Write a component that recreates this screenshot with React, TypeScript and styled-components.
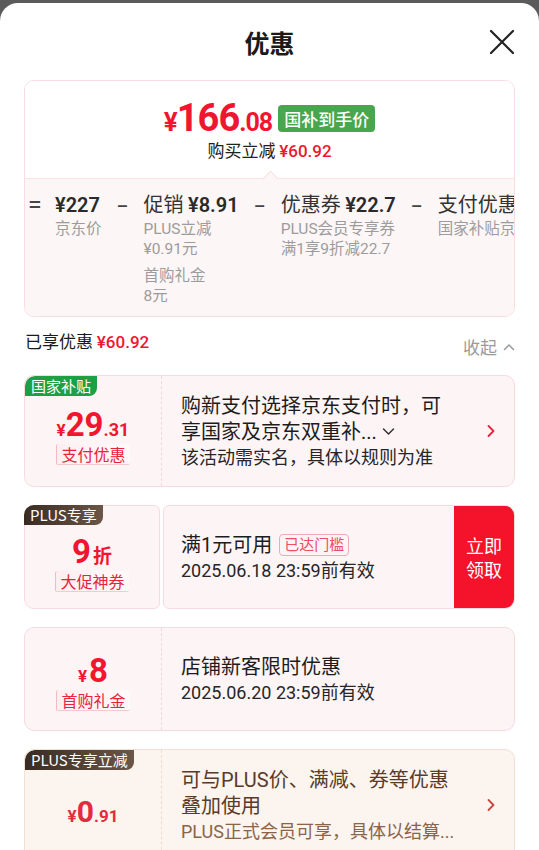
import React from "react";
import styled, { createGlobalStyle, css } from "styled-components";

const RED = "#f0162f";
const CJK = `"Noto Sans CJK SC", "Noto Sans", sans-serif`;
const NUM = `Roboto, "Noto Sans CJK SC", sans-serif`;

const GlobalStyle = createGlobalStyle`
  body {
    margin: 0;
    background: #5b5b5b;
    font-family: ${CJK};
    color: #1f1f1f;
  }
  #root {
    padding-top: 3px;
  }
`;

const Sheet = styled.div`
  height: 847px;
  background: #fff;
  border-radius: 18px 18px 0 0;
  overflow: hidden;
`;

const Header = styled.header`
  display: grid;
  grid-template-columns: 1fr auto 1fr;
  align-items: center;
  height: 77px;
  padding: 0 24px;
`;

const Title = styled.h1`
  grid-column: 2;
  margin: 0;
  font-size: 25px;
  font-weight: 700;
  color: #1a1a1a;
`;

const CloseButton = styled.button`
  justify-self: end;
  display: flex;
  padding: 0;
  border: none;
  background: none;
`;

// ---- price summary box
const PriceBox = styled.section`
  margin: 0 24px;
  border: 1px solid #fadce2;
  border-radius: 10px;
  overflow: hidden;
`;

const PriceTop = styled.div`
  display: flex;
  flex-direction: column;
  align-items: center;
  padding: 17px 0 15px;
  background: #fff;
  border-bottom: 1px solid #fbe4e8;
`;

const FinalRow = styled.div`
  display: flex;
  align-items: center;
  gap: 6px;
  height: 40px;
`;

const FinalPrice = styled.span`
  font-family: ${NUM};
  font-weight: 700;
  color: ${RED};
  letter-spacing: -1px;
`;

const Part = styled.span<{ $size: number }>`
  font-size: ${(p) => p.$size}px;
`;

const GreenBadge = styled.span`
  height: 27px;
  padding: 0 6px;
  border-radius: 4px;
  background: #48a64e;
  color: #fff;
  font-size: 17px;
  font-weight: 500;
  line-height: 27px;
`;

const SavedLine = styled.div`
  font-size: 17px;
  line-height: 24px;
  color: #222;
`;

const RedNum = styled.span<{ $size?: number }>`
  font-family: ${NUM};
  font-weight: 500;
  color: ${RED};
  font-size: ${(p) => p.$size ?? 17}px;
`;

const Breakdown = styled.div`
  position: relative;
  display: flex;
  align-items: flex-start;
  height: 137px;
  padding: 11px 0 0 4px;
  box-sizing: border-box;
  background: #fdf6f7;
  white-space: nowrap;

  &::before {
    content: "";
    position: absolute;
    top: -6px;
    left: 240px;
    width: 10px;
    height: 10px;
    background: #fdf6f7;
    border-top: 1px solid #f8dfe4;
    border-left: 1px solid #f8dfe4;
    transform: rotate(45deg);
  }
`;

const Op = styled.span`
  flex: none;
  width: 12px;
  margin: 0 15px;
  font-size: 20px;
  line-height: 28px;
  font-weight: 700;
  color: #444;
  text-align: center;

  &:first-child {
    margin-left: 0;
    margin-right: 14px;
  }
`;

const Col = styled.div`
  flex: none;
  display: flex;
  flex-direction: column;
`;

const ColMain = styled.div`
  font-size: 20px;
  line-height: 28px;
  color: #333;

  b {
    font-family: ${NUM};
    font-weight: 600;
    color: #2a2a2a;
  }
`;

const ColSub = styled.div`
  font-size: 15.5px;
  line-height: 20px;
  color: #9c9c9c;
  font-family: ${NUM};
`;

const SubGroup = styled.div`
  margin-top: 7px;
`;

// ---- summary row
const SummaryRow = styled.div`
  display: flex;
  justify-content: space-between;
  align-items: flex-start;
  margin: 11px 24px 0 25px;
`;

const SummaryText = styled.div`
  font-size: 17px;
  line-height: 26px;
  color: #1a1a1a;
`;

const Collapse = styled.div`
  display: flex;
  align-items: center;
  gap: 6px;
  margin-top: 6px;
  font-size: 17px;
  line-height: 26px;
  color: #9a9a9a;
`;

// ---- coupon cards
const CardList = styled.div`
  display: flex;
  flex-direction: column;
  gap: 18px;
  margin: 15px 24px 0;
`;

type Tone = "pink" | "beige";

const cardSkin = css<{ $tone?: Tone }>`
  border: 1px solid ${(p) => (p.$tone === "beige" ? "#f1e0d3" : "#f6dbe1")};
  background: ${(p) => (p.$tone === "beige" ? "#fcf4ee" : "#fdf4f6")};
`;

const Card = styled.div<{ $tone?: Tone; $h: number }>`
  position: relative;
  display: flex;
  height: ${(p) => p.$h}px;
  box-sizing: border-box;
  border-radius: 10px;
  overflow: hidden;
  ${cardSkin}
`;

const Ticket = styled.div<{ $h: number }>`
  position: relative;
  display: flex;
  gap: 3px;
  height: ${(p) => p.$h}px;
`;

const Stub = styled.div<{ $tone?: Tone; $split?: boolean; $pt?: number }>`
  flex: none;
  width: 137px;
  box-sizing: border-box;
  display: flex;
  flex-direction: column;
  align-items: center;
  justify-content: center;
  padding-top: ${(p) => p.$pt ?? 0}px;
  border-right: 1px dashed ${(p) => (p.$tone === "beige" ? "#eedccd" : "#f3d6dc")};
  ${(p) =>
    p.$split &&
    css`
      width: 136px;
      border-radius: 10px 6px 6px 10px;
      ${cardSkin}
    `}
`;

const Tag = styled.span<{ $tone: "green" | "brown" }>`
  position: absolute;
  top: 0;
  left: 0;
  height: 20px;
  padding: 0 6px;
  border-radius: 10px 0 8px 0;
  font-size: 15px;
  line-height: 20px;
  color: #fff;
  background: ${(p) =>
    p.$tone === "green" ? "#1f9f45" : "linear-gradient(90deg, #3a2b22, #6b5647)"};
  z-index: 1;
`;

const Amount = styled.div<{ $color?: string }>`
  display: flex;
  align-items: baseline;
  height: 38px;
  line-height: 38px;
  font-family: ${NUM};
  font-weight: 700;
  color: ${(p) => p.$color ?? RED};
`;

const StubLabel = styled.span`
  padding: 0 4px;
  border-left: 1px solid #f4b9c2;
  border-bottom: 1px solid #f4c9d0;
  border-radius: 2px;
  background: linear-gradient(90deg, #fdeef1, #fffafa);
  font-size: 16px;
  line-height: 20px;
  color: #e8233a;
`;

const Body = styled.div<{ $split?: boolean; $pl?: number }>`
  flex: 1;
  display: flex;
  align-items: center;
  min-width: 0;
  padding-left: ${(p) => p.$pl ?? 19}px;
  ${(p) =>
    p.$split &&
    css`
      border-radius: 6px 10px 10px 6px;
      overflow: hidden;
      ${cardSkin}
    `}
`;

const Texts = styled.div`
  flex: 1;
  min-width: 0;
`;

const CardTitle = styled.div<{ $brown?: boolean }>`
  font-size: 20px;
  line-height: 26px;
  color: ${(p) => (p.$brown ? "#5a3a28" : "#1c1c1c")};
  font-family: ${NUM};
`;

const CardSub = styled.div<{ $brown?: boolean; $mt?: number }>`
  margin-top: ${(p) => p.$mt ?? 0}px;
  font-size: 18px;
  line-height: 25px;
  color: ${(p) => (p.$brown ? "#8a644a" : "#262626")};
  font-family: ${NUM};
`;

const Chevron = styled.span`
  flex: none;
  display: flex;
  padding: 0 19px 0 12px;
`;

const Reached = styled.span`
  display: inline-block;
  margin-left: 7px;
  padding: 0 4px;
  height: 20px;
  border: 1px solid #f3aab6;
  border-radius: 4px;
  font-size: 15px;
  line-height: 20px;
  color: #ef4b63;
  vertical-align: 2px;
`;

const ClaimButton = styled.button`
  flex: none;
  align-self: stretch;
  width: 60px;
  border: none;
  padding: 0;
  background: #f4132b;
  color: #fff;
  font-family: ${CJK};
  font-size: 18px;
  line-height: 24px;
`;

const RightArrow = ({ color = "#e8233a" }: { color?: string }) => (
  <svg width="8" height="14" viewBox="0 0 8 14">
    <path d="M1.5 2 L6.5 7 L1.5 12" fill="none" stroke={color} strokeWidth="1.8" strokeLinecap="round" strokeLinejoin="round" />
  </svg>
);

const breakdown = [
  { main: <><b>¥227</b></>, subs: [["京东价"]] },
  { main: <>促销 <b>¥8.91</b></>, subs: [["PLUS立减", "¥0.91元"], ["首购礼金", "8元"]] },
  { main: <>优惠券 <b>¥22.7</b></>, subs: [["PLUS会员专享券", "满1享9折减22.7"]] },
  { main: <>支付优惠 <b>¥29.31</b></>, subs: [["国家补贴京东支付"]] },
];

export default function App() {
  return (
    <>
      <GlobalStyle />
      <Sheet>
        <Header>
          <Title>优惠</Title>
          <CloseButton aria-label="关闭">
            <svg width="26" height="26" viewBox="0 0 26 26">
              <path d="M2 2 L24 24 M24 2 L2 24" stroke="#222" strokeWidth="2.2" strokeLinecap="round" />
            </svg>
          </CloseButton>
        </Header>

        <PriceBox>
          <PriceTop>
            <FinalRow>
              <FinalPrice>
                <Part $size={26}>¥</Part>
                <Part $size={38}>166</Part>
                <Part $size={25}>.08</Part>
              </FinalPrice>
              <GreenBadge>国补到手价</GreenBadge>
            </FinalRow>
            <SavedLine>
              购买立减 <RedNum>¥60.92</RedNum>
            </SavedLine>
          </PriceTop>
          <Breakdown>
            <Op>=</Op>
            {breakdown.map((item, i) => (
              <React.Fragment key={i}>
                {i > 0 && <Op>–</Op>}
                <Col>
                  <ColMain>{item.main}</ColMain>
                  {item.subs.map((group, j) =>
                    j === 0 ? (
                      group.map((s) => <ColSub key={s}>{s}</ColSub>)
                    ) : (
                      <SubGroup key={j}>
                        {group.map((s) => (
                          <ColSub key={s}>{s}</ColSub>
                        ))}
                      </SubGroup>
                    )
                  )}
                </Col>
              </React.Fragment>
            ))}
          </Breakdown>
        </PriceBox>

        <SummaryRow>
          <SummaryText>
            已享优惠 <RedNum>¥60.92</RedNum>
          </SummaryText>
          <Collapse>
            收起
            <svg width="12" height="8" viewBox="0 0 12 8">
              <path d="M1.5 6.5 L6 2 L10.5 6.5" fill="none" stroke="#9a9a9a" strokeWidth="1.5" strokeLinecap="round" />
            </svg>
          </Collapse>
        </SummaryRow>

        <CardList>
          <Card $h={112}>
            <Tag $tone="green">国家补贴</Tag>
            <Stub $pt={8}>
              <Amount>
                <Part $size={17}>¥</Part>
                <Part $size={33}>29</Part>
                <Part $size={18}>.31</Part>
              </Amount>
              <StubLabel>支付优惠</StubLabel>
            </Stub>
            <Body>
              <Texts>
                <CardTitle>
                  购新支付选择京东支付时，可
                  <br />
                  享国家及京东双重补...{" "}
                  <svg width="13" height="9" viewBox="0 0 13 9" style={{ verticalAlign: 3 }}>
                    <path d="M1.5 2 L6.5 7 L11.5 2" fill="none" stroke="#333" strokeWidth="1.5" strokeLinecap="round" />
                  </svg>
                </CardTitle>
                <CardSub>该活动需实名，具体以规则为准</CardSub>
              </Texts>
              <Chevron>
                <RightArrow />
              </Chevron>
            </Body>
          </Card>

          <Ticket $h={104}>
            <Tag $tone="brown">PLUS专享</Tag>
            <Stub $split $pt={10}>
              <Amount>
                <Part $size={33}>9</Part>
                <Part $size={19} style={{ marginLeft: 2 }}>折</Part>
              </Amount>
              <StubLabel>大促神券</StubLabel>
            </Stub>
            <Body $split $pl={17}>
              <Texts>
                <CardTitle>
                  满1元可用<Reached>已达门槛</Reached>
                </CardTitle>
                <CardSub>2025.06.18 23:59前有效</CardSub>
              </Texts>
              <ClaimButton>
                立即
                <br />
                领取
              </ClaimButton>
            </Body>
          </Ticket>

          <Card $h={104}>
            <Stub $pt={4}>
              <Amount>
                <Part $size={17}>¥</Part>
                <Part $size={33} style={{ marginLeft: 2 }}>8</Part>
              </Amount>
              <StubLabel>首购礼金</StubLabel>
            </Stub>
            <Body>
              <Texts>
                <CardTitle>店铺新客限时优惠</CardTitle>
                <CardSub>2025.06.20 23:59前有效</CardSub>
              </Texts>
            </Body>
          </Card>

          <Card $tone="beige" $h={112}>
            <Tag $tone="brown">PLUS专享立减</Tag>
            <Stub $tone="beige" $pt={14}>
              <Amount $color="#e32a3e">
                <Part $size={17}>¥</Part>
                <Part $size={30}>0</Part>
                <Part $size={17}>.91</Part>
              </Amount>
            </Stub>
            <Body>
              <Texts>
                <CardTitle $brown>
                  可与PLUS价、满减、券等优惠
                  <br />
                  叠加使用
                </CardTitle>
                <CardSub $brown>PLUS正式会员可享，具体以结算...</CardSub>
              </Texts>
              <Chevron>
                <RightArrow color="#c8473f" />
              </Chevron>
            </Body>
          </Card>
        </CardList>
      </Sheet>
    </>
  );
}
